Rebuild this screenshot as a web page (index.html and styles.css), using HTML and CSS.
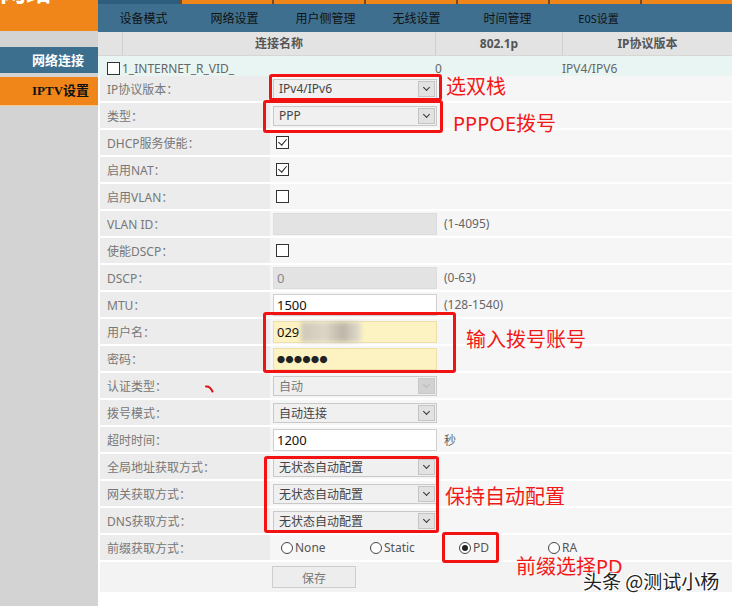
FILE: index.html
```html
<!DOCTYPE html>
<html lang="zh">
<head>
  <meta charset="UTF-8">
  <title>网络连接</title>
  <link rel="stylesheet" href="styles.css">
</head>
<body>
  <div class="page">
    <aside class="side">
      <div class="brand"><span>网络</span></div>
      <a class="side-link active">网络连接</a>
      <a class="side-link iptv">IPTV设置</a>
    </aside>

    <main class="main">
      <div class="strip">
        <i class="s-blue"></i><i></i><i></i><i></i><i></i><i></i><i></i>
      </div>
      <nav class="nav">
        <a>设备模式</a>
        <a>网络设置</a>
        <a>用户侧管理</a>
        <a>无线设置</a>
        <a>时间管理</a>
        <a class="eos">E0S设置</a>
      </nav>

      <div class="conn">
        <div class="conn-head">
          <span class="c0"></span>
          <span class="c1">连接名称</span>
          <span class="c2">802.1p</span>
          <span class="c3">IP协议版本</span>
        </div>
        <div class="conn-row">
          <span class="c0"><i class="cb"></i></span>
          <span class="c1">1_INTERNET_R_VID_</span>
          <span class="c2">0</span>
          <span class="c3">IPV4/IPV6</span>
        </div>
      </div>

      <div class="form">
        <div class="row">
          <div class="label">IP协议版本：</div>
          <div class="value"><div class="select"><span>IPv4/IPv6</span><b class="arrow"></b></div></div>
        </div>
        <div class="row">
          <div class="label">类型：</div>
          <div class="value"><div class="select"><span>PPP</span><b class="arrow"></b></div></div>
        </div>
        <div class="row">
          <div class="label">DHCP服务使能：</div>
          <div class="value"><i class="cb on"></i></div>
        </div>
        <div class="row">
          <div class="label">启用NAT：</div>
          <div class="value"><i class="cb on"></i></div>
        </div>
        <div class="row">
          <div class="label">启用VLAN：</div>
          <div class="value"><i class="cb"></i></div>
        </div>
        <div class="row">
          <div class="label">VLAN ID：</div>
          <div class="value"><div class="input off"></div><span class="hint">(1-4095)</span></div>
        </div>
        <div class="row">
          <div class="label">使能DSCP：</div>
          <div class="value"><i class="cb"></i></div>
        </div>
        <div class="row">
          <div class="label">DSCP：</div>
          <div class="value"><div class="input off">0</div><span class="hint">(0-63)</span></div>
        </div>
        <div class="row">
          <div class="label">MTU：</div>
          <div class="value"><div class="input">1500</div><span class="hint">(128-1540)</span></div>
        </div>
        <div class="row">
          <div class="label">用户名：</div>
          <div class="value"><div class="input fill">029<span class="blur"></span></div></div>
        </div>
        <div class="row">
          <div class="label">密码：</div>
          <div class="value"><div class="input fill dots">●●●●●●</div></div>
        </div>
        <div class="row">
          <div class="label">认证类型：</div>
          <div class="value"><div class="select off"><span>自动</span><b class="arrow"></b></div></div>
        </div>
        <div class="row">
          <div class="label">拨号模式：</div>
          <div class="value"><div class="select"><span>自动连接</span><b class="arrow"></b></div></div>
        </div>
        <div class="row">
          <div class="label">超时时间：</div>
          <div class="value"><div class="input">1200</div><span class="hint">秒</span></div>
        </div>
        <div class="row">
          <div class="label">全局地址获取方式：</div>
          <div class="value"><div class="select"><span>无状态自动配置</span><b class="arrow"></b></div></div>
        </div>
        <div class="row">
          <div class="label">网关获取方式：</div>
          <div class="value"><div class="select"><span>无状态自动配置</span><b class="arrow"></b></div></div>
        </div>
        <div class="row">
          <div class="label">DNS获取方式：</div>
          <div class="value"><div class="select"><span>无状态自动配置</span><b class="arrow"></b></div></div>
        </div>
        <div class="row">
          <div class="label">前缀获取方式：</div>
          <div class="value radios">
            <label><i class="radio"></i>None</label>
            <label><i class="radio"></i>Static</label>
            <label><i class="radio on"></i>PD</label>
            <label><i class="radio"></i>RA</label>
          </div>
        </div>
      </div>

      <div class="save-row"><button class="btn">保存</button></div>
    </main>

    <!-- annotations drawn over the screenshot -->
    <div class="mark m1"></div>
    <div class="mark m2"></div>
    <div class="mark m3"></div>
    <div class="mark m4"></div>
    <div class="mark m5"></div>
    <span class="note n1">选双栈</span>
    <span class="note n2">PPPOE拨号</span>
    <span class="note n3">输入拨号账号</span>
    <span class="note n4">保持自动配置</span>
    <span class="note n5">前缀选择PD</span>
    <svg class="tick" width="10" height="8" viewBox="0 0 10 8"><path d="M1 1.5 Q5 1 7.5 6.5" fill="none" stroke="#e01010" stroke-width="2" stroke-linecap="round"/></svg>
    <span class="watermark">头条 @测试小杨</span>
  </div>
</body>
</html>
```

FILE: styles.css
```css
body {
  margin: 0;
  background: #fff;
  font-family: "Noto Sans", "Noto Sans CJK SC", sans-serif;
  font-size: 12px;
  color: #666;
}

.page {
  position: relative;
  display: flex;
  width: 732px;
  height: 606px;
  overflow: hidden;
}

/* left menu */
.side {
  width: 98px;
  flex-shrink: 0;
  background: #d3d3d3;
  display: flex;
  flex-direction: column;
}

.brand {
  height: 31px;
  background: #f08519;
  overflow: hidden;
  margin-bottom: 16px;
}

.brand span {
  display: block;
  margin-top: -26px;
  font-size: 26px;
  font-weight: bold;
  color: #fff;
  line-height: 34px;
}

.side-link {
  display: block;
  height: 26px;
  line-height: 26px;
  padding-left: 32px;
  font-size: 13px;
  font-weight: bold;
}

.side-link.active {
  background: #3c6e8e;
  color: #fff;
  margin-bottom: 4px;
}

.side-link.iptv {
  height: 28px;
  line-height: 28px;
  background: #f08519;
  color: #111;
  font-family: "Liberation Serif", "Noto Sans CJK SC", serif;
  border-bottom: 1px solid #f3c98a;
}

/* right part */
.main {
  flex: 1;
  display: flex;
  flex-direction: column;
}

.strip {
  display: flex;
  height: 4px;
  gap: 2px;
  background: #7a4a20;
}

.strip i {
  flex: 1;
  background: #f08519;
}

.strip .s-blue {
  flex: 0 0 82px;
  background: #2f5d7c;
}

.nav {
  display: flex;
  height: 28px;
  background: #3f6f8f;
}

.nav a {
  width: 91px;
  line-height: 30px;
  text-align: center;
  color: #111;
  font-size: 12px;
}

.nav a.eos {
  font-size: 11px;
}

.conn-head,
.conn-row {
  display: flex;
}

.conn-head span,
.conn-row span {
  box-sizing: border-box;
}

.conn-head {
  height: 23px;
  line-height: 23px;
  background: #e3e3e3;
  font-weight: bold;
  color: #555;
  text-align: center;
  border-bottom: 1px solid #d6d6d6;
}

.conn-head span + span {
  border-left: 1px solid #cfcfcf;
}

.conn-row {
  height: 20px;
  line-height: 25px;
  background: #e8f5f2;
  color: #666;
}

.c0 { width: 24px; }
.c1 { width: 313px; }
.c2 { width: 127px; }
.c3 { flex: 1; }

.conn-row .c0 {
  display: flex;
  align-items: center;
  justify-content: flex-end;
  padding-right: 2px;
}

.conn-row .c0 .cb {
  margin: 5px 0 0 0;
}

/* form */
.form {
  margin-left: 2px;
}

.row {
  display: flex;
  height: 25px;
  border-bottom: 2px solid #fff;
}

.label {
  width: 170px;
  padding-left: 7px;
  box-sizing: border-box;
  background: #ececec;
  line-height: 27px;
  color: #777;
}

.value {
  flex: 1;
  display: flex;
  align-items: center;
  padding-left: 3px;
  background: #f6f6f6;
}

.select {
  width: 164px;
  height: 20px;
  box-sizing: border-box;
  border: 1px solid #c9c9c9;
  background: #f0f0f0;
  display: flex;
  align-items: center;
  color: #444;
  font-size: 12px;
}

.select span {
  flex: 1;
  padding-left: 5px;
}

.select.off span {
  color: #777;
}

.arrow {
  position: relative;
  width: 17px;
  height: 16px;
  margin-right: 1px;
  background: #e2e2e2;
  border: 1px solid #c4c4c4;
  box-sizing: border-box;
}

.arrow::after {
  content: "";
  position: absolute;
  left: 5px;
  top: 3px;
  width: 4px;
  height: 4px;
  border-right: 1px solid #333;
  border-bottom: 1px solid #333;
  transform: rotate(45deg);
}

.select.off .arrow {
  background: #d2d2d2;
  border-color: #c8c8c8;
}

.select.off .arrow::after {
  border-color: #bbb;
}

.input {
  width: 164px;
  height: 22px;
  box-sizing: border-box;
  border: 1px solid #cfcfcf;
  background: #fff;
  padding-left: 3px;
  line-height: 20px;
  font-size: 13px;
  color: #111;
  display: flex;
  align-items: center;
}

.input.off {
  background: #e3e3e3;
  border-color: #dcdcdc;
  color: #888;
}

.input.fill {
  background: #fdf2c2;
  border-color: #eedfa8;
}

.input.dots {
  font-size: 8px;
  letter-spacing: 0.5px;
  color: #222;
  padding-top: 2px;
}

.blur {
  display: inline-block;
  width: 60px;
  height: 20px;
  margin-left: 2px;
  background: linear-gradient(90deg, #cfc8ba, #ddd6c6 40%, #bdb6a8 70%, #e5dfd0);
  filter: blur(2px);
}

.hint {
  margin-left: 7px;
  color: #666;
}

.cb {
  display: inline-block;
  width: 13px;
  height: 13px;
  box-sizing: border-box;
  border: 1px solid #333;
  background: #fff;
  margin-left: 3px;
  position: relative;
}

.cb.on::after {
  content: "";
  position: absolute;
  left: 3px;
  top: 0;
  width: 4px;
  height: 7px;
  border-right: 1.5px solid #222;
  border-bottom: 1.5px solid #222;
  transform: rotate(40deg);
}

.radios label {
  width: 89px;
  display: flex;
  align-items: center;
  font-size: 12px;
  color: #555;
}

.radios label:first-child {
  margin-left: 8px;
}

.radio {
  display: inline-block;
  width: 12px;
  height: 12px;
  box-sizing: border-box;
  border: 1px solid #444;
  border-radius: 50%;
  background: #fff;
  margin-right: 2px;
  position: relative;
}

.radio.on::after {
  content: "";
  position: absolute;
  left: 2px;
  top: 2px;
  width: 6px;
  height: 6px;
  border-radius: 50%;
  background: #222;
}

.save-row {
  height: 30px;
  margin-left: 2px;
  background: #f3f3f3;
  padding-left: 172px;
  display: flex;
  align-items: center;
}

.btn {
  width: 84px;
  height: 22px;
  border: 1px solid #cdcdcd;
  background: #ededed;
  color: #777;
  font-family: "Noto Sans CJK SC", sans-serif;
  font-size: 12px;
  padding: 0;
}

/* red marks */
.mark {
  position: absolute;
  border: 3px solid #f21212;
  border-radius: 3px;
  box-sizing: border-box;
}

.m1 { left: 269px; top: 74px; width: 173px; height: 27px; }
.m2 { left: 263px; top: 100px; width: 180px; height: 33px; }
.m3 { left: 263px; top: 312px; width: 193px; height: 61px; }
.m4 { left: 264px; top: 456px; width: 175px; height: 77px; }
.m5 { left: 442px; top: 532px; width: 57px; height: 31px; }

.note {
  position: absolute;
  font-family: "Noto Sans CJK SC", sans-serif;
  font-size: 20px;
  color: #f21818;
  line-height: 20px;
}

.n1 { left: 446px; top: 76px; }
.n2 { left: 453px; top: 114px; font-family: "Noto Sans", "Noto Sans CJK SC", sans-serif; }
.n3 { left: 466px; top: 329px; }
.n4 { left: 445px; top: 486px; }
.n5 { left: 516px; top: 557px; font-family: "Noto Sans", "Noto Sans CJK SC", sans-serif; }

.tick {
  position: absolute;
  left: 205px;
  top: 385px;
}

.watermark {
  position: absolute;
  left: 583px;
  top: 567px;
  font-family: "Noto Sans CJK SC", sans-serif;
  font-size: 19px;
  color: #222;
  text-shadow: 1px 1px 0 #fff, -1px -1px 0 #fff, 1px -1px 0 #fff, -1px 1px 0 #fff;
}
```
